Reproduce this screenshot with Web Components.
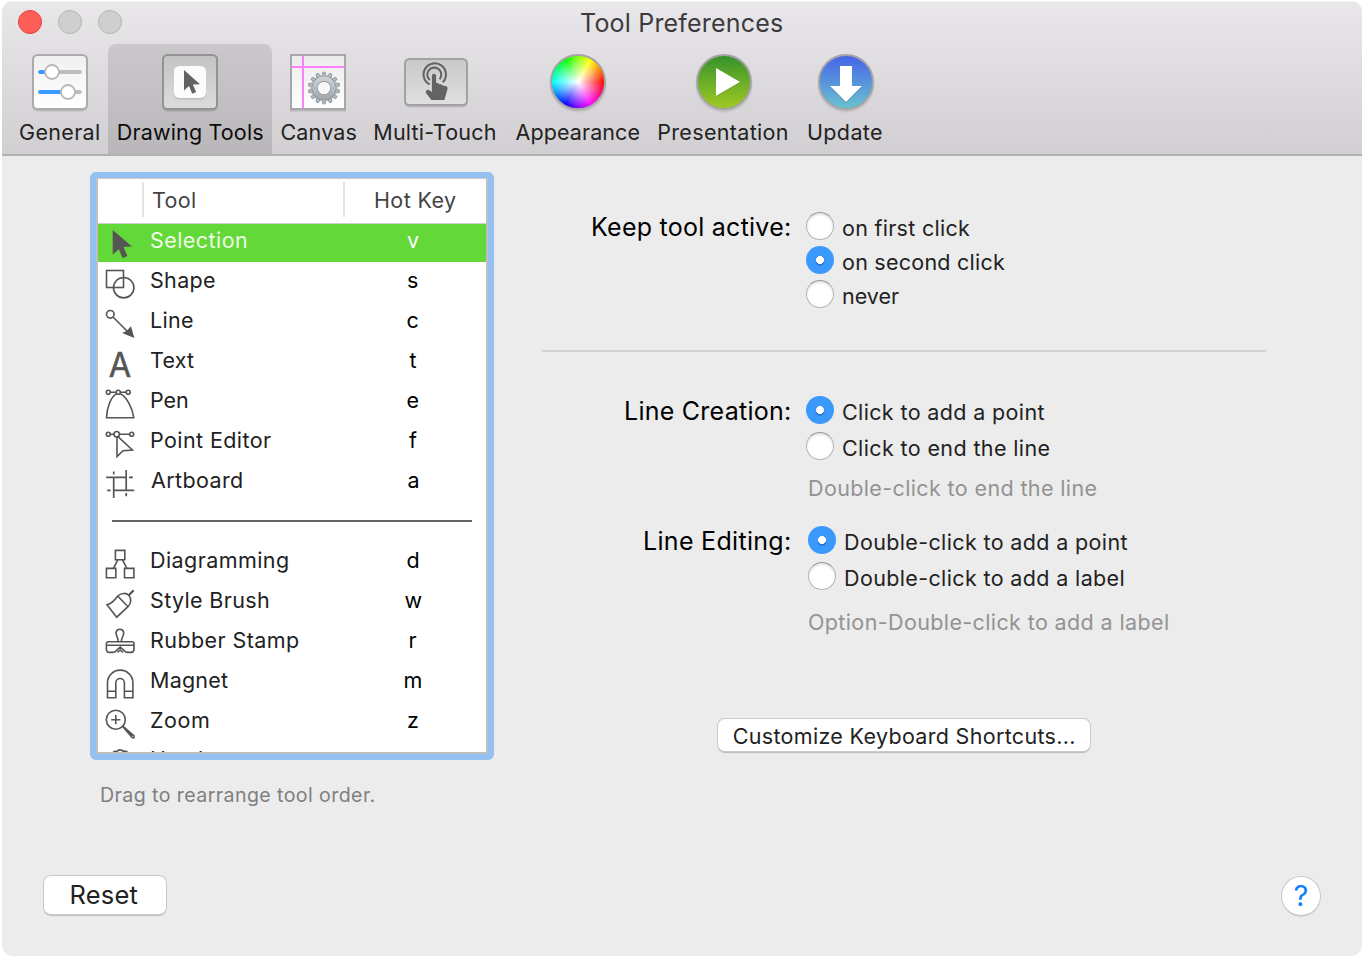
<!DOCTYPE html>
<html lang="en">
<head>
<meta charset="utf-8">
<title>Tool Preferences</title>
<style>
  html, body { margin: 0; background: #fff; }
  body { font-family: Inter, "Liberation Sans", sans-serif; color: #222; overflow: hidden; height: 958px; }
</style>
</head>
<body>
<prefs-window></prefs-window>

<script>
const define = (name, html, setup) => {
  const tpl = document.createElement('template');
  tpl.innerHTML = html;
  customElements.define(name, class extends HTMLElement {
    connectedCallback() {
      if (this.shadowRoot) return;
      this.attachShadow({ mode: 'open' }).append(tpl.content.cloneNode(true));
      if (setup) setup(this, this.shadowRoot);
    }
  });
};

/* Single line of text tracked to an exact ink width: w = width, size = font size. */
const ctx = document.createElement('canvas').getContext('2d');
define('ui-text', `
  <style>
    :host { display: block; flex: none; line-height: 28px; white-space: nowrap; }
    span { display: block; }
  </style>
  <span><slot></slot></span>`, (el, root) => {
  const size = +(el.getAttribute('size') || 21.5), w = +el.getAttribute('w');
  const weight = el.getAttribute('weight') || 400;
  const text = el.textContent;
  ctx.font = `${weight} ${size}px Inter, "Liberation Sans", sans-serif`;
  const m = ctx.measureText(text);
  const ink = m.actualBoundingBoxLeft + m.actualBoundingBoxRight;
  const span = root.querySelector('span');
  el.style.width = (w || ink) + 'px';
  el.style.fontSize = size + 'px';
  el.style.fontWeight = weight;
  span.style.marginLeft = m.actualBoundingBoxLeft + 'px';
  if (w && text.length > 1) span.style.letterSpacing = ((w - ink) / (text.length - 1)).toFixed(3) + 'px';
});

/* Toolbar artwork */
const toolbarArt = {
  general: `<svg width="60" height="60" viewBox="-2 -2 60 60">
    <defs><linearGradient id="g" x2="0" y2="1"><stop stop-color="#f0f0f0"/><stop offset="1" stop-color="#fff"/></linearGradient></defs>
    <rect x="1" y="2.5" width="54" height="54" rx="5" fill="none" stroke="#0002" stroke-width="2"/>
    <rect x="1" y="1" width="54" height="54" rx="4.5" fill="url(#g)" stroke="#acaaac" stroke-width="2"/>
    <g stroke-width="3.8" stroke-linecap="round"><path d="M20 18H48M36 38H48" stroke="#bdbdbd"/><path d="M8 18H18M8 38H34" stroke="#3a99fc"/></g>
    <g fill="#fff" stroke="#b9b9b9" stroke-width="1.8"><circle cx="20" cy="18" r="7"/><circle cx="36" cy="38" r="7"/></g></svg>`,
  tools: `<svg width="60" height="60" viewBox="-2 -2 60 60">
    <defs><linearGradient id="g" x2="0" y2="1"><stop stop-color="#c3c3c3"/><stop offset="1" stop-color="#dcdcdc"/></linearGradient></defs>
    <rect x="1" y="2.5" width="54" height="54" rx="5" fill="none" stroke="#0002" stroke-width="2"/>
    <rect x="1" y="1" width="54" height="54" rx="4.5" fill="url(#g)" stroke="#949294" stroke-width="2"/>
    <rect x="12" y="13.5" width="32" height="32" rx="5.5" fill="#bbb"/><rect x="12" y="12" width="32" height="32" rx="5.5" fill="#fcfcfc"/>
    <path d="M22 16 38 30.3 30.8 30.6 34.2 38 30.2 39.8 27 32 22 36.6Z" fill="#636363"/></svg>`,
  canvas: `<svg style="margin-left:-2px" width="60" height="60" viewBox="-2 -2 60 60">
    <defs><linearGradient id="g" x2="0" y2="1"><stop stop-color="#ebebeb"/><stop offset="1" stop-color="#fff"/></linearGradient>
    <linearGradient id="h" x2="0" y2="1"><stop stop-color="#c9d0d4"/><stop offset="1" stop-color="#a4acb2"/></linearGradient></defs>
    <rect x="1" y="2.5" width="54" height="54" fill="none" stroke="#0002" stroke-width="2"/>
    <rect x="1" y="1" width="54" height="54" fill="url(#g)" stroke="#a8a6a8" stroke-width="2"/>
    <path d="M13 2V54M2 13H54" stroke="#ff80ff" stroke-width="2"/>
    <g transform="translate(34 34)"><g id="t" fill="#b3babe" stroke="#858d92" stroke-width=".7"></g>
    <circle r="9.3" fill="none" stroke="#858d92" stroke-width="6"/><circle r="9.3" fill="none" stroke="url(#h)" stroke-width="4.8"/></g></svg>`,
  touch: `<svg width="68" height="60" viewBox="-2 -6 68 60">
    <defs><linearGradient id="g" x2="0" y2="1"><stop stop-color="#c8c8c8"/><stop offset="1" stop-color="#e0e0e0"/></linearGradient></defs>
    <rect x="1" y="2.5" width="62" height="46" rx="5" fill="none" stroke="#0002" stroke-width="2"/>
    <rect x="1" y="1" width="62" height="46" rx="4.5" fill="url(#g)" stroke="#a3a1a3" stroke-width="2"/>
    <g fill="none" stroke="#636363" stroke-width="2.1"><path d="M25.5 26.4A11.2 11.2 0 1 1 38.8 24.3"/><path d="M25.8 22A7 7 0 1 1 35.6 21.2"/></g>
    <path d="M27.9 31.5V17.8Q27.9 15.8 30 15.8T32.1 17.8V25Q34.8 24.5 35.6 26.4 38 25.8 39 27.8 43.6 27 43.6 30.6L42 36.6 40.4 42H27.4L21.6 34.4Q22 30.8 25 32L27.9 34Z" fill="#636363"/></svg>`,
  appearance: `<i class="ball wheel"></i>`,
  play: `<i class="ball green"><svg width="52" height="52" viewBox="0 0 52 52"><path d="M18 13 42 26.5 18 41Z" fill="#0003"/><path d="M18 12 42 26 18 40Z" fill="#fff"/></svg></i>`,
  update: `<i class="ball blue"><svg width="52" height="52" viewBox="0 0 52 52"><path d="M20 11H32V31H42L26 47 10 31H20Z" fill="#0003"/><path d="M20 10H32V30H42L26 46 10 30H20Z" fill="#fff"/></svg></i>`
};
define('toolbar-item', `
  <style>
    :host { display: flex; flex-direction: column; align-items: center; box-sizing: border-box; height: 110px; padding-top: 8px; flex: none; border-radius: 8px 8px 0 0; color: #222; }
    :host([active]) { background: linear-gradient(#cac8ca, #b9b7b9); color: #0c0c0c; }
    .art { height: 60px; display: flex; align-items: center; justify-content: center; }
    .ball { display: block; width: 52px; height: 52px; border-radius: 50%; border: 2px solid #a5a3a6; box-shadow: 0 2px 2px #0002; }
    .ball svg { display: block; }
    .green { background: linear-gradient(#36922c, #9fc924); }
    .blue { background: linear-gradient(#4664e8, #69c2d2); margin-left: 2px; }
    .wheel { background: radial-gradient(closest-side, #fff, #fff0 100%), conic-gradient(from 90deg, #f00, #f0f, #00f, #0ff, #0f0, #ff0, #f00); }
    .label { margin-top: 6px; }
  </style>
  <div class="art"></div><div class="label"><slot></slot></div>`, (el, root) => {
  el.style.width = el.getAttribute('width') + 'px';
  root.querySelector('.art').innerHTML = toolbarArt[el.getAttribute('art')];
  const teeth = root.querySelector('#t');
  if (teeth) teeth.innerHTML = Array.from({ length: 14 }, (_, i) =>
    `<path d="M-2.2-11.5-1.3-15.8H1.3L2.2-11.5Z" transform="rotate(${i * 360 / 14})"/>`).join('');
});

/* Tool glyphs, 44 by 40 cell */
const glyphs = {
  Selection: `<path d="M14.7 8 34 24.4 25.6 25 29.4 34 24.6 36.2 20.8 27.3 14.7 32.8Z" fill="#555" stroke="none"/>`,
  Shape: `<rect x="8.5" y="8.5" width="17" height="17"/><circle cx="25.7" cy="25.7" r="10.2"/>`,
  Line: `<circle cx="12.3" cy="12.3" r="3.8"/><path d="M15 15 29.5 29.5"/><path d="M36.3 36 33 24.3 28.8 28.8 24.2 31Z" fill="#555" stroke="none"/>`,
  Text: `<text x="10.8" y="34.6" font-size="34" font-weight="400" textLength="22.4" lengthAdjust="spacingAndGlyphs" fill="#555" stroke="#555" stroke-width=".5">A</text>`,
  Pen: `<path d="M12.3 10.3H18.3M22.3 10.3H28.2M18.7 11.6C12.5 15 8.9 26 8.5 35.7H35.7C34.6 26 28.5 14.5 21.9 11.6"/><circle cx="10.3" cy="10.3" r="2"/><circle cx="20.3" cy="10.3" r="2"/><circle cx="30.2" cy="10.3" r="2"/>`,
  'Point Editor': `<path d="M12.3 12.3H16M21.4 12.3H31.7M19 15V34.5L25 28.7 34.4 28 20 14.6"/><circle cx="10.3" cy="12.3" r="2"/><circle cx="18.7" cy="12.2" r="2.7"/><circle cx="33.7" cy="12.3" r="2"/>`,
  Artboard: `<path d="M15.7 15.3V36M15.7 9.5V12.6M28.2 8V28.3M28.2 31V34.2M8.2 15.4H28.2M31 15.4H34.8M15.7 28.3H36.2M9.2 28.3H12.6" stroke-width="1.7"/>`,
  Diagramming: `<path d="M17.4 8.4h9.4v9.4H17.4ZM8.4 26.4h9.4v9.4H8.4ZM26.5 26.4h9.4v9.4H26.5ZM19.8 17.8 15.4 26.4M24.4 17.8 28.9 26.4"/>`,
  'Style Brush': `<path d="M35.7 8.3 30.7 13.3" stroke-width="2.2"/><path d="M19.7 14C23.5 10.5 28.5 10.8 31 13.5 33.5 16.5 33.3 21.5 30 24.7ZM19.7 14Q14.5 21.5 9 22.7L18.7 35.2 30 24.7"/>`,
  'Rubber Stamp': `<path d="M20.2 19.7C20.4 16 18 14.5 18 10.5A3.9 3.9 0 0 1 25.7 10.5C25.7 14.5 23.2 16 23.3 19.7M10.5 19.7H34Q36 19.7 36 21.7V23.2H8.4V21.7Q8.4 19.7 10.5 19.7ZM8.4 23.2V27Q8.4 30.4 11.5 30.4H14.5Q17 30.4 18.5 28.4L22.2 25 26 28.4Q27.5 30.4 30 30.4H33Q36 30.4 36 27V23.2M19.4 30.4 22.2 28 25 30.4"/>`,
  Magnet: `<path d="M9.5 35.7V20.8A12.7 12.7 0 0 1 34.9 20.8V35.7H26.4V20.8A4.2 4.2 0 0 0 17.8 20.8V35.7ZM9.5 29.3H17.8M26.4 29.3H34.9"/>`,
  Zoom: `<circle cx="17.8" cy="17.7" r="9.5"/><path d="M13.2 17.7H22.4M17.8 13.1V22.3M24.7 24.6 34.3 35.7H36V33.8L25 24.3M28.5 27.7 34.5 33.8"/>`,
  Hand: `<path d="M14 12Q16 8.5 19 9.6 20.5 7 24 8.3 25.5 9.6 28 9.2 30 10 30 14M19 9.6V20M25 9.2V20"/>`
};
define('tool-row', `
  <style>
    :host { display: flex; height: 40px; box-sizing: border-box; color: #222; }
    :host([selected]) { color: #edfbe7; background: linear-gradient(#cfcfcf 1px, #62d938 1px) 0 1px no-repeat; }
    svg { display: block; flex: none; overflow: visible; fill: none; stroke: #555; stroke-width: 1.6; font-family: Inter, sans-serif; }
    .name { width: 194px; padding: 4px 0 0 9px; box-sizing: content-box; }
    .key { flex: none; width: 136px; padding-top: 4px; display: flex; justify-content: center; color: #000; }
    :host([name="Hand"]) .name { padding-top: 3px; }
    :host([name="Hand"]) .key { color: #555; }
    :host([selected]) .key { color: #fff; }
    .rule { align-self: center; height: 2px; width: 360px; margin: -2px auto 0 14px; background: #666; }
  </style>`, (el, root) => {
  if (el.hasAttribute('rule')) { root.innerHTML += '<div class="rule"></div>'; return; }
  const name = el.getAttribute('name');
  root.innerHTML += `<svg width="44" height="40" viewBox="0 0 44 40">${glyphs[name]}</svg>
    <div class="name"><ui-text w="${el.getAttribute('w')}">${name}</ui-text></div>
    <div class="key"><ui-text size="21.5">${el.getAttribute('key')}</ui-text></div>`;
});

define('tool-table', `
  <style>
    :host { display: block; box-sizing: border-box; width: 404px; height: 588px; border: 6px solid #94c1f2; border-radius: 6px; }
    .inner { box-sizing: border-box; height: 576px; border: 2px solid #bfbfbf; border-top: 1px solid #c9c9c9; background: #fff; overflow: hidden; }
    header { display: flex; align-items: center; height: 43px; box-sizing: border-box; padding: 0 0 2px 44px; color: #444; }
    header i { width: 2px; height: 35px; background: #e3e3e3; flex: none; }
    .a { margin: 0 148px 0 9px; } .b { margin-left: 30px; }
  </style>
  <div class="inner">
    <header><i></i><ui-text class="a" w="42">Tool</ui-text><i></i><ui-text class="b" w="81">Hot Key</ui-text></header>
    <tool-row selected name="Selection" key="v" w="96"></tool-row>
    <tool-row name="Shape" key="s" w="64"></tool-row>
    <tool-row name="Line" key="c" w="42"></tool-row>
    <tool-row name="Text" key="t" w="43"></tool-row>
    <tool-row name="Pen" key="e" w="37"></tool-row>
    <tool-row name="Point Editor" key="f" w="120"></tool-row>
    <tool-row name="Artboard" key="a" w="91"></tool-row>
    <tool-row rule></tool-row>
    <tool-row name="Diagramming" key="d" w="137"></tool-row>
    <tool-row name="Style Brush" key="w" w="118"></tool-row>
    <tool-row name="Rubber Stamp" key="r" w="148"></tool-row>
    <tool-row name="Magnet" key="m" w="77"></tool-row>
    <tool-row name="Zoom" key="z" w="58"></tool-row>
    <tool-row name="Hand" key="Space" w="51"></tool-row>
  </div>`);

define('radio-option', `
  <style>
    :host { display: flex; height: 28px; gap: 9px; }
    i { flex: none; box-sizing: border-box; width: 28px; height: 28px; border-radius: 50%; background: #fff; border: 1px solid #b4b4b4; border-top-color: #999; box-shadow: inset 0 2px 2px #0000001c; }
    :host([checked]) i { border: 0; box-shadow: none; background: radial-gradient(circle at 14px 14px, #fff 3.7px, #fff0 4.3px), radial-gradient(circle at 14px 15.5px, #2475cc 3.5px, #2475cc00 5px), #3b99fc; }
    .t { padding-top: 2px; }
  </style><i></i><div class="t"><slot></slot></div>`);

define('pref-group', `
  <style>
    :host { display: flex; }
    .label { flex: none; width: 248px; display: flex; justify-content: flex-end; color: #000; padding-top: 1px; }
    .options { display: flex; flex-direction: column; gap: var(--gap, 8px); margin-left: var(--indent, 16px); }
  </style>
  <div class="label"><slot name="label"></slot></div><div class="options"><slot></slot></div>`);

define('push-button', `
  <style>
    :host { display: flex; align-items: center; justify-content: center; box-sizing: border-box; background: #fff; border-radius: 7px; box-shadow: 0 0 0 1px #c9c9c9, 0 1.5px 1px #0003; color: #222; }
  </style><slot></slot>`);

define('prefs-window', `
  <style>
    :host { display: flex; flex-direction: column; box-sizing: border-box; width: 1360px; height: 955px; margin: 1px 0 0 2px; background: #ececec; border-radius: 11px; overflow: hidden; }
    .top { flex: none; height: 155px; box-sizing: border-box; background: linear-gradient(#e9e7ea, #d2cfd2); border-bottom: 2px solid #b2b0b2; border-top: 1px solid #f4f3f4; }
    .title { display: flex; height: 42px; align-items: center; position: relative; justify-content: center; color: #3c3a3d; padding-right: 1px; }
    .lights { position: absolute; left: 16px; top: 8px; display: flex; gap: 16px; }
    .lights i { width: 24px; height: 24px; box-sizing: border-box; border-radius: 50%; background: #cfcfcf; border: 1px solid #b5b3b5; }
    .lights i:first-child { background: #ff5f57; border-color: #e3413d; }
    nav { display: flex; padding-left: 10px; }
    main { display: flex; flex: 1; min-height: 0; }
    .left { width: 492px; flex: none; padding: 16px 0 0 88px; box-sizing: border-box; }
    .note { margin: 21px 0 0 11px; color: #808080; }
    .reset { width: 122px; height: 38px; margin: 67px 0 0 -46px; padding-right: 1px; }
    .right { width: 868px; padding: 56px 40px 0 48px; box-sizing: border-box; }
    hr { border: 0; height: 2px; width: 724px; background: #d2d2d2; margin: 42px 0 44px; }
    .hint { color: #939393; margin-left: 267px; }
    .cust { width: 372px; height: 32px; margin: 83px 0 0 176px; padding-top: 2px; }
    .help { width: 38px; height: 38px; border-radius: 50%; margin: 126px 0 0 740px; color: #0a80ff; }
  </style>
  <div class="top">
    <div class="title"><div class="lights"><i></i><i></i><i></i></div><ui-text size="25" w="201">Tool Preferences</ui-text></div>
    <nav>
      <toolbar-item art="general" width="96"><ui-text style="margin-left:-1px" w="79">General</ui-text></toolbar-item>
      <toolbar-item art="tools" width="164" active><ui-text style="margin-left:1px" w="145.5">Drawing Tools</ui-text></toolbar-item>
      <toolbar-item art="canvas" width="94"><ui-text w="75">Canvas</ui-text></toolbar-item>
      <toolbar-item art="touch" width="140"><ui-text style="margin-left:-2px" w="121.5">Multi-Touch</ui-text></toolbar-item>
      <toolbar-item art="appearance" width="143"><ui-text w="124">Appearance</ui-text></toolbar-item>
      <toolbar-item art="play" width="149"><ui-text style="margin-left:-1px" w="129.5">Presentation</ui-text></toolbar-item>
      <toolbar-item art="update" width="94"><ui-text w="74">Update</ui-text></toolbar-item>
    </nav>
  </div>
  <main>
    <section class="left">
      <tool-table></tool-table>
      <ui-text class="note" size="19.6" w="273.5">Drag to rearrange tool order.</ui-text>
      <push-button class="reset"><ui-text size="25.5" w="66">Reset</ui-text></push-button>
    </section>
    <section class="right">
      <pref-group style="--gap:6px">
        <ui-text slot="label" size="25" w="197">Keep tool active:</ui-text>
        <radio-option><ui-text w="127">on first click</ui-text></radio-option>
        <radio-option checked><ui-text w="162">on second click</ui-text></radio-option>
        <radio-option><ui-text w="56">never</ui-text></radio-option>
      </pref-group>
      <hr>
      <pref-group>
        <ui-text slot="label" size="25" w="164">Line Creation:</ui-text>
        <radio-option checked><ui-text w="201.5">Click to add a point</ui-text></radio-option>
        <radio-option><ui-text w="206.5">Click to end the line</ui-text></radio-option>
      </pref-group>
      <ui-text class="hint" style="margin-top:14px" w="287.5">Double-click to end the line</ui-text>
      <pref-group style="--indent:18px;margin-top:24px">
        <ui-text slot="label" size="25" w="145">Line Editing:</ui-text>
        <radio-option checked><ui-text w="282.5">Double-click to add a point</ui-text></radio-option>
        <radio-option><ui-text w="278.5">Double-click to add a label</ui-text></radio-option>
      </pref-group>
      <ui-text class="hint" style="margin-top:18px" w="359">Option-Double-click to add a label</ui-text>
      <push-button class="cust"><ui-text w="340.5">Customize Keyboard Shortcuts...</ui-text></push-button>
      <push-button class="help"><ui-text size="29" weight="400">?</ui-text></push-button>
    </section>
  </main>`);
</script>
</body>
</html>
